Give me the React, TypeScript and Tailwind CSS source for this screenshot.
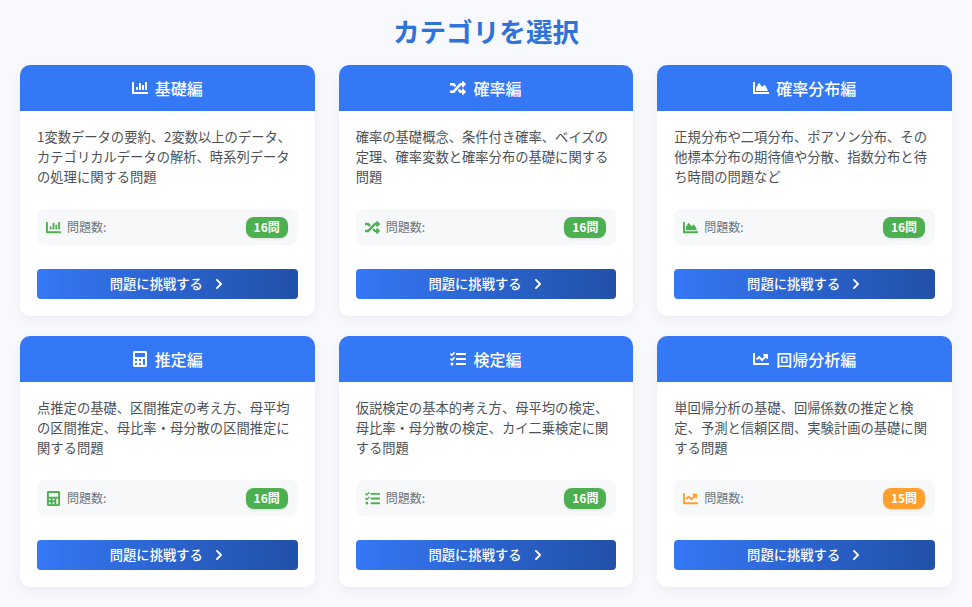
import type { ComponentType } from "react";
import { FaChartArea, FaChartBar, FaChartLine, FaCalculator, FaChevronRight, FaRandom, FaTasks } from "react-icons/fa";

type Category = {
  title: string;
  icon: ComponentType<{ className?: string }>;
  lines: string[];
  count: number;
  gap: string;
};

const categories: Category[] = [
  {
    title: "基礎編",
    icon: FaChartBar,
    lines: ["1変数データの要約、2変数以上のデータ、", "カテゴリカルデータの解析、時系列データ", "の処理に関する問題"],
    count: 16,
    gap: "gap-[6px]",
  },
  {
    title: "確率編",
    icon: FaRandom,
    lines: ["確率の基礎概念、条件付き確率、ベイズの", "定理、確率変数と確率分布の基礎に関する", "問題"],
    count: 16,
    gap: "gap-[6px]",
  },
  {
    title: "確率分布編",
    icon: FaChartArea,
    lines: ["正規分布や二項分布、ポアソン分布、その", "他標本分布の期待値や分散、指数分布と待", "ち時間の問題など"],
    count: 16,
    gap: "gap-[6px]",
  },
  {
    title: "推定編",
    icon: FaCalculator,
    lines: ["点推定の基礎、区間推定の考え方、母平均", "の区間推定、母比率・母分散の区間推定に", "関する問題"],
    count: 16,
    gap: "gap-[6px]",
  },
  {
    title: "検定編",
    icon: FaTasks,
    lines: ["仮説検定の基本的考え方、母平均の検定、", "母比率・母分散の検定、カイ二乗検定に関", "する問題"],
    count: 16,
    gap: "gap-[6px]",
  },
  {
    title: "回帰分析編",
    icon: FaChartLine,
    lines: ["単回帰分析の基礎、回帰係数の推定と検", "定、予測と信頼区間、実験計画の基礎に関", "する問題"],
    count: 15,
    gap: "gap-[6px]",
  },
];

function CategoryCard({ category }: { category: Category }) {
  const Icon = category.icon;
  const full = category.count >= 16;
  return (
    <div className="h-[251px] overflow-hidden rounded-[10px] bg-white shadow-[0_4px_12px_rgba(0,0,0,0.05)]">
      <div className="flex h-[46px] items-center justify-center gap-[7px] bg-[#3578f6] text-white">
        <Icon className="h-4 w-4" />
        <h2 className="text-[16px] font-medium">{category.title}</h2>
      </div>
      <div className="px-[17px] pt-[16px]">
        <p className="text-[13.3px] leading-[20px] text-[#4b5157]">
          {category.lines.map((line) => (
            <span key={line} className="block whitespace-nowrap">
              {line}
            </span>
          ))}
        </p>
        <div className="mt-[22px] flex h-[36px] items-center justify-between rounded-lg bg-[#f7f8fa] pl-[9px] pr-[10px]">
          <div className={`flex items-center ${category.gap} text-[12px] text-[#6c757d]`}>
            <Icon className={`h-[15px] w-[15px] ${full ? "text-[#4caf50]" : "text-[#ff9f2e]"}`} />
            <span>問題数:</span>
          </div>
          <span
            className={`flex h-[21px] w-[42px] items-center justify-center rounded-[8px] text-[12px] font-bold text-white shadow-[0_1px_3px_rgba(0,0,0,0.1)] ${
              full ? "bg-[#4caf50]" : "bg-[#ff9f2e]"
            }`}
          >
            {category.count}問
          </span>
        </div>
        <button className="mt-[24px] flex h-[30px] w-full items-center justify-center gap-[10px] rounded-[4px] bg-gradient-to-r from-[#3578f6] to-[#2150a8] text-[13.3px] font-medium text-white">
          問題に挑戦する
          <FaChevronRight className="h-[12px] w-[12px]" />
        </button>
      </div>
    </div>
  );
}

export default function App() {
  return (
    <div className="min-h-[607px] bg-[#f7f9fc] px-[20px] pt-[12px] font-['Noto_Sans_CJK_JP','Noto_Sans',sans-serif]">
      <h1 className="h-[53px] text-center text-[26.6px] leading-[38px] font-bold text-[#2f72d9]">カテゴリを選択</h1>
      <div className="grid grid-cols-3 gap-x-[24px] gap-y-[20px]">
        {categories.map((category) => (
          <CategoryCard key={category.title} category={category} />
        ))}
      </div>
    </div>
  );
}
